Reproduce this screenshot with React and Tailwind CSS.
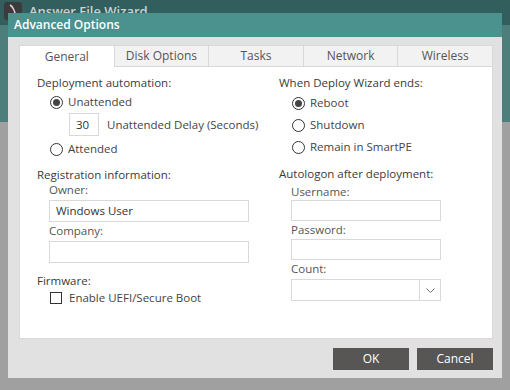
import React from 'react';

const font = { fontFamily: '"Open Sans", "Noto Sans", sans-serif' };

const Radio = ({ checked, label }) => (
  <div className="flex items-center gap-[5px] h-[22px]">
    <span className="w-[13px] h-[13px] rounded-full border border-[#333] flex items-center justify-center bg-white">
      {checked && <span className="w-[7px] h-[7px] rounded-full bg-[#444]" />}
    </span>
    <span className="text-[11.5px] text-[#444]">{label}</span>
  </div>
);

const Field = ({ value = '', className = 'w-[200px] h-[22px]' }) => (
  <div className={`border border-[#d9d9d9] bg-white flex items-center px-[6px] text-[11.5px] text-[#333] ${className}`}>
    {value}
  </div>
);

const Heading = ({ children, className = '' }) => (
  <div className={`text-[11.5px] text-[#3a3a3a] h-[16px] flex items-center ${className}`}>{children}</div>
);

const Label = ({ children, className = '' }) => (
  <div className={`text-[11.5px] text-[#555] h-[14px] flex items-center ${className}`}>{children}</div>
);

const tabs = ['General', 'Disk Options', 'Tasks', 'Network', 'Wireless'];

export default function App() {
  return (
    <div className="relative w-[510px] h-[390px] overflow-hidden bg-[#a0a0a0]" style={font}>
      {/* window behind */}
      <div className="flex flex-col">
        <div className="h-[25px] bg-[#325f5e] flex items-start gap-[7px] pl-[4px]">
          <div className="w-[18px] h-[18px] mt-[2px] rounded-[3px] bg-[#3b3b3b] flex items-center justify-center">
            <svg width="10" height="14" viewBox="0 0 10 14">
              <path d="M2 1 C6 3 7 8 8 13" stroke="#dcdcdc" strokeWidth="1.4" fill="none" />
            </svg>
          </div>
          <span className="text-[13px] font-semibold text-[#c9d3d2] leading-[17px] mt-[3px]">Answer File Wizard</span>
        </div>
        <div className="h-[97px] bg-[#4e7e7b]" />
      </div>

      {/* dialog */}
      <div className="absolute left-[8px] top-[13px] w-[494px] h-[365px] bg-[#e1e1e1] flex flex-col">
        <div className="h-[24px] bg-[#4b918e] flex items-center pl-[6px] text-white text-[12px] font-semibold">
          Advanced Options
        </div>

        <div className="pl-[11px] pr-[9px] pt-[8px] flex flex-col">
          <div className="flex h-[22px]">
            {tabs.map((t, i) => (
              <div
                key={t}
                className={`flex-1 flex items-center justify-center text-[12px] text-[#555] border-t border-l border-[#d9d9d9] ${
                  i === tabs.length - 1 ? 'border-r' : ''
                } ${i === 0 ? 'bg-white' : 'bg-[#f2f2f2] border-b'}`}
              >
                {t}
              </div>
            ))}
          </div>

          <div className="h-[272px] bg-white border-x border-b border-[#d9d9d9] flex pl-[17px] pt-[8px]">
            {/* left column */}
            <div className="w-[242px] flex flex-col">
              <Heading>Deployment automation:</Heading>
              <div className="pl-[13px] flex flex-col">
                <Radio checked label="Unattended" />
                <div className="flex items-center gap-[8px] pl-[19px] mb-[2px]">
                  <Field value="30" className="w-[30px] h-[23px] px-[6px]" />
                  <span className="text-[11.5px] text-[#444]">Unattended Delay (Seconds)</span>
                </div>
                <Radio label="Attended" />
              </div>

              <Heading className="mt-[7px]">Registration information:</Heading>
              <div className="pl-[12px] flex flex-col">
                <Label className="mb-[3px]">Owner:</Label>
                <Field value="Windows User" />
                <Label className="mt-[2px] mb-[3px]">Company:</Label>
                <Field />
              </div>

              <Heading className="mt-[10px]">Firmware:</Heading>
              <div className="pl-[13px] flex items-center gap-[7px] h-[15px] mt-[1px]">
                <span className="w-[12px] h-[12px] border border-[#333] bg-white" />
                <span className="text-[11.5px] text-[#444]">Enable UEFI/Secure Boot</span>
              </div>
            </div>

            {/* right column */}
            <div className="flex flex-col">
              <Heading>When Deploy Wizard ends:</Heading>
              <div className="pl-[13px] flex flex-col mt-[1px]">
                <Radio checked label="Reboot" />
                <Radio label="Shutdown" />
                <Radio label="Remain in SmartPE" />
              </div>

              <Heading className="mt-[8px]">Autologon after deployment:</Heading>
              <div className="pl-[12px] flex flex-col">
                <Label className="mt-[3px] mb-[1px]">Username:</Label>
                <Field className="w-[150px] h-[21px]" />
                <Label className="mt-[2px] mb-[2px]">Password:</Label>
                <Field className="w-[150px] h-[21px]" />
                <Label className="mt-[2px] mb-[3px]">Count:</Label>
                <div className="w-[150px] h-[22px] border border-[#d9d9d9] bg-white flex">
                  <div className="flex-1" />
                  <div className="w-[21px] border-l border-[#d9d9d9] flex items-center justify-center">
                    <svg width="9" height="5" viewBox="0 0 9 5">
                      <path d="M0.5 0.5 L4.5 4.5 L8.5 0.5" stroke="#777" fill="none" />
                    </svg>
                  </div>
                </div>
              </div>
            </div>
          </div>

          <div className="flex justify-end gap-[8px] mt-[9px]">
            <button className="w-[76px] h-[22px] bg-[#585654] text-white text-[12px]">OK</button>
            <button className="w-[76px] h-[22px] bg-[#585654] text-white text-[12px]">Cancel</button>
          </div>
        </div>
      </div>
    </div>
  );
}
